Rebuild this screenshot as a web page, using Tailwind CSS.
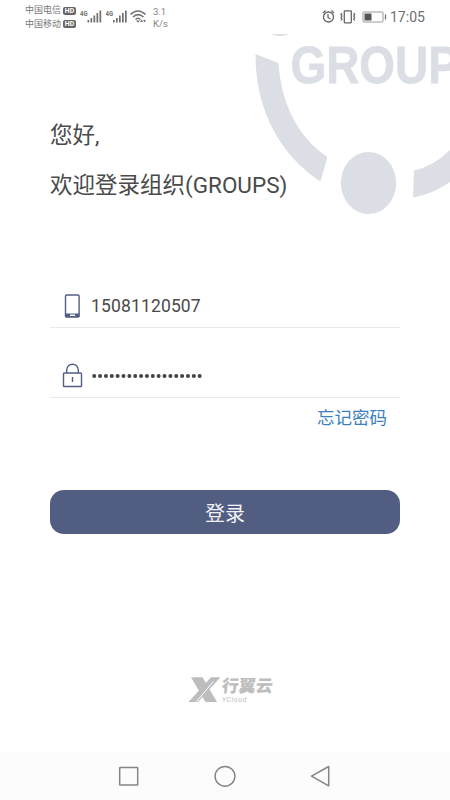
<!DOCTYPE html>
<html lang="zh-CN">
<head>
  <meta charset="UTF-8">
  <meta name="viewport" content="width=device-width, initial-scale=1.0">
  <title>登录</title>
  <script src="https://cdn.jsdelivr.net/npm/@tailwindcss/browser@4"></script>
</head>
<body class="bg-white font-[Roboto,'Noto_Sans_CJK_SC',sans-serif] text-[#4a4a4a]">
  <div class="relative w-[450px] h-[800px] flex flex-col overflow-hidden">
    <!-- Watermark -->
    <svg class="absolute left-0 top-0" width="450" height="230" viewBox="0 0 450 230" fill="#dbdfe5">
      <path d="M271 34H289Q280 38 271 34Z"/>
      <path d="M255.500 54L278.500 63C281 102 297 137 327.500 157L320.500 181.500C281 156 255 110 255.500 54Z"/>
      <ellipse cx="368.500" cy="183" rx="27.700" ry="31"/>
      <path d="M414 170.500Q434 166 450 150V182Q433 194 413 197.500Z"/>
      <text transform="translate(290.500 83) scale(.9 1)" font-family="Liberation Sans" font-weight="700" font-size="51" stroke="#dbdfe5" stroke-width=".8">GROUP</text>
    </svg>

    <!-- Status bar -->
    <header class="relative h-[34px] flex items-start justify-between pl-[25px] pr-[25px] text-[#777]">
      <div class="flex">
        <div class="w-[52px] pt-[4px] text-[9px] leading-[13.5px]">
          <div class="flex items-center gap-[2px]"><span>中国电信</span><span class="w-[13px] h-[8px] rounded-[2px] bg-[#666] text-white text-[7px] leading-[8px] font-bold text-center">HD</span></div>
          <div class="flex items-center gap-[2px]"><span>中国移动</span><span class="w-[13px] h-[8px] rounded-[2px] bg-[#666] text-white text-[7px] leading-[8px] font-bold text-center">HD</span></div>
        </div>
        <svg width="73" height="30" viewBox="77 0 73 30" fill="#707070">
          <g id="signal">
            <text x="80" y="15.500" font-size="7.500" font-weight="700" textLength="7.500" lengthAdjust="spacingAndGlyphs">4G</text>
            <path d="M87.500 20h1.700v2.500h-1.700zM90.500 18h1.700v4.500h-1.700zM93.500 15.500h1.700v7h-1.700zM96.500 13h1.700v9.500h-1.700zM99.500 10.500h1.700v12h-1.700z"/>
          </g>
          <use href="#signal" x="25.500"/>
          <path d="M130.500 14.500Q138 7.500 145.500 14.500M133 17Q138 12.300 143.500 17M135.500 19.500Q138 17 140.500 19.500" fill="none" stroke="#707070" stroke-width="1.500"/>
          <path d="M136 20.500L138 22.800L140 20.500Z"/>
          <path d="M141.500 19.500l1.500 2.500h-3zM144.500 22.500l1.500-2.500h-3z"/>
        </svg>
        <div class="ml-[3px] pt-[6px] text-[9.5px] leading-[11.5px] text-[#858585]">3.1<br>K/s</div>
      </div>
      <div class="flex">
        <svg width="68" height="32" viewBox="320 0 68 32" fill="none" stroke="#666" stroke-width="1.300">
          <circle cx="328.500" cy="17" r="5"/>
          <path d="M328 14v3.500l2.500 1.500M323 13l2.500-2.500M334 13l-2.500-2.500"/>
          <rect x="344.300" y="10.800" width="7" height="12" rx=".5"/>
          <path d="M342 13l-1 1.500 1 1.500-1 1.500 1 1.500-1 1.500M353.700 13l1 1.500-1 1.500 1 1.500-1 1.500 1 1.500"/>
          <rect x="363" y="12" width="20" height="10" rx="1" stroke="#999" stroke-width="1"/>
          <path d="M364.500 13.500h7v7h-7z" fill="#555" stroke="none"/>
          <path d="M385.500 14.500v5" stroke="#777"/>
        </svg>
        <span class="ml-[2px] w-[35px] pt-[9px] text-[14px] leading-[17px] text-[#707070]">17:05</span>
      </div>
    </header>

    <main class="relative flex-1 flex flex-col px-[50px]">
      <h1 class="mt-[85px] text-[22.5px] leading-[32px] whitespace-nowrap">您好,</h1>
      <h2 class="mt-[18px] text-[22.5px] leading-[32px] whitespace-nowrap">欢迎登录组织(GROUPS)</h2>

      <div class="mt-[83px] h-[44px] flex items-center border-b border-[#e9e9e9]">
        <svg class="ml-[14px]" width="17" height="26" viewBox="0 0 17 26">
          <rect x="1.500" y="2" width="13.600" height="22" rx="1.200" fill="none" stroke="#525d82" stroke-width="1.400"/>
          <path d="M1.500 20.500h14v3.500h-14z" fill="#525d82"/>
          <path d="M6 21.500h5v1.500h-5z" fill="#fff"/>
        </svg>
        <span class="ml-[10px] text-[17.5px] leading-6 tracking-[0.15px]">15081120507</span>
      </div>

      <div class="mt-[26px] h-[44px] flex items-center border-b border-[#e9e9e9]">
        <svg class="ml-[12px]" width="21" height="26" viewBox="0 0 21 26" fill="none" stroke="#525d82" stroke-width="1.400">
          <rect x="1.500" y="10" width="18" height="13.500" rx=".8"/>
          <path d="M4.700 10V7C4.700 -.7 16.300 -.7 16.300 7V10M10.500 14v5"/>
        </svg>
        <svg class="ml-[9px]" width="112" height="6" viewBox="0 0 112 6">
          <path d="M2.200 3H110" fill="none" stroke="#444" stroke-width="4" stroke-linecap="round" stroke-dasharray="0 5.860"/>
        </svg>
      </div>

      <a class="mt-[8px] mr-[13px] self-end text-[17.5px] leading-6 text-[#3d80c0]">忘记密码</a>

      <button class="mt-[60px] h-[44px] rounded-[14px] bg-[#525d82] pt-[4px] text-[20px] leading-[40px] text-[#f0f1f5]">登录</button>

      <!-- Vendor logo -->
      <div class="mt-[141px] ml-[138px] flex text-[#bdbdbd]">
        <svg width="33" height="28" viewBox="188 675 33 28" fill="currentColor">
          <path d="M191 677.300H202.500L217 702H205.500ZM211 677.300H220.500L198 702H188.500Z"/>
          <path d="M213.500 681.500L196.500 701.500" stroke="#fff" stroke-width="1"/>
        </svg>
        <div class="ml-px pt-px">
          <div class="text-[17px] leading-[20px] font-black -skew-x-6">行翼云</div>
          <div class="text-[7px] leading-[8px] italic tracking-[0.6px]">YCloud</div>
        </div>
      </div>
    </main>

    <!-- Navigation bar -->
    <nav class="relative h-[48px] bg-[#fcfcfc]">
      <svg width="450" height="48" viewBox="0 752 450 48" fill="none" stroke="#858585" stroke-width="1.500" stroke-linejoin="round">
        <rect x="119.700" y="767.500" width="18" height="17.500" rx=".5"/>
        <circle cx="225" cy="776.300" r="9.900"/>
        <path d="M328.700 766.500v19.300L311.500 776.200z"/>
      </svg>
    </nav>
  </div>
</body>
</html>
